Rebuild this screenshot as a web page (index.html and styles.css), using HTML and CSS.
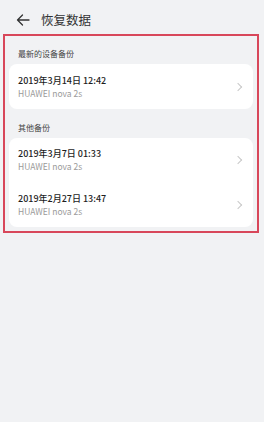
FILE: index.html
```html
<!DOCTYPE html>
<html>
<head>
    <meta charset="utf-8">
    <title>恢复数据</title>
    <link rel="stylesheet" href="styles.css">
</head>
<body>
    <!-- Barre du haut -->
    <div class="header">
        <svg class="back" width="14" height="12" viewBox="0 0 14 12">
            <path d="M13 6H1.5M6.5 1L1.5 6l5 5" fill="none" stroke="#333" stroke-width="1.3" stroke-linecap="round" stroke-linejoin="round"/>
        </svg>
        <span class="title">恢复数据</span>
    </div>

    <!-- Liste des sauvegardes -->
    <div class="panel">
        <div class="label">最新的设备备份</div>
        <div class="card">
            <div class="row">
                <div class="info">
                    <div class="date">2019年3月14日 12:42</div>
                    <div class="device">HUAWEI nova 2s</div>
                </div>
                <span class="chevron"></span>
            </div>
        </div>

        <div class="label second">其他备份</div>
        <div class="card">
            <div class="row">
                <div class="info">
                    <div class="date">2019年3月7日 01:33</div>
                    <div class="device">HUAWEI nova 2s</div>
                </div>
                <span class="chevron"></span>
            </div>
            <div class="row">
                <div class="info">
                    <div class="date">2019年2月27日 13:47</div>
                    <div class="device">HUAWEI nova 2s</div>
                </div>
                <span class="chevron"></span>
            </div>
        </div>
    </div>
</body>
</html>
```

FILE: styles.css
```css
/* Styles généraux */
body {
    margin: 0;
    background: #f1f2f4;
    font-family: "Noto Sans CJK SC", "Noto Sans", sans-serif;
    color: #222;
}

/* Barre du haut */
.header {
    height: 34px;
    display: flex;
    align-items: center;
    padding-left: 16px;
    padding-top: 5px;
    box-sizing: border-box;
}

.back {
    display: block;
}

.title {
    margin-left: 11px;
    font-size: 12.5px;
    color: #333;
}

/* Cadre rouge */
.panel {
    margin: 0 5px 0 3px;
    border: 2px solid #d8475a;
    padding: 0 4px 5px 4px;
    height: 199px;
    box-sizing: border-box;
}

.label {
    font-size: 8px;
    line-height: 12px;
    color: #444;
    padding: 12px 0 4px 9px;
}

.label.second {
    padding-top: 13px;
    padding-bottom: 4px;
}

.card {
    background: #fff;
    border-radius: 8px;
}

.row {
    height: 44.5px;
    display: flex;
    align-items: center;
    padding: 1px 12px 0 9px;
    box-sizing: border-box;
}

.info {
    flex: 1;
}

.date {
    font-size: 9px;
    font-weight: 500;
    line-height: 13px;
    color: #1e1e1e;
}

.device {
    font-size: 8.5px;
    line-height: 13px;
    color: #9a9a9a;
}

.chevron {
    width: 5px;
    height: 5px;
    border-top: 1.2px solid #c8c8c8;
    border-right: 1.2px solid #c8c8c8;
    transform: rotate(45deg);
}
```
